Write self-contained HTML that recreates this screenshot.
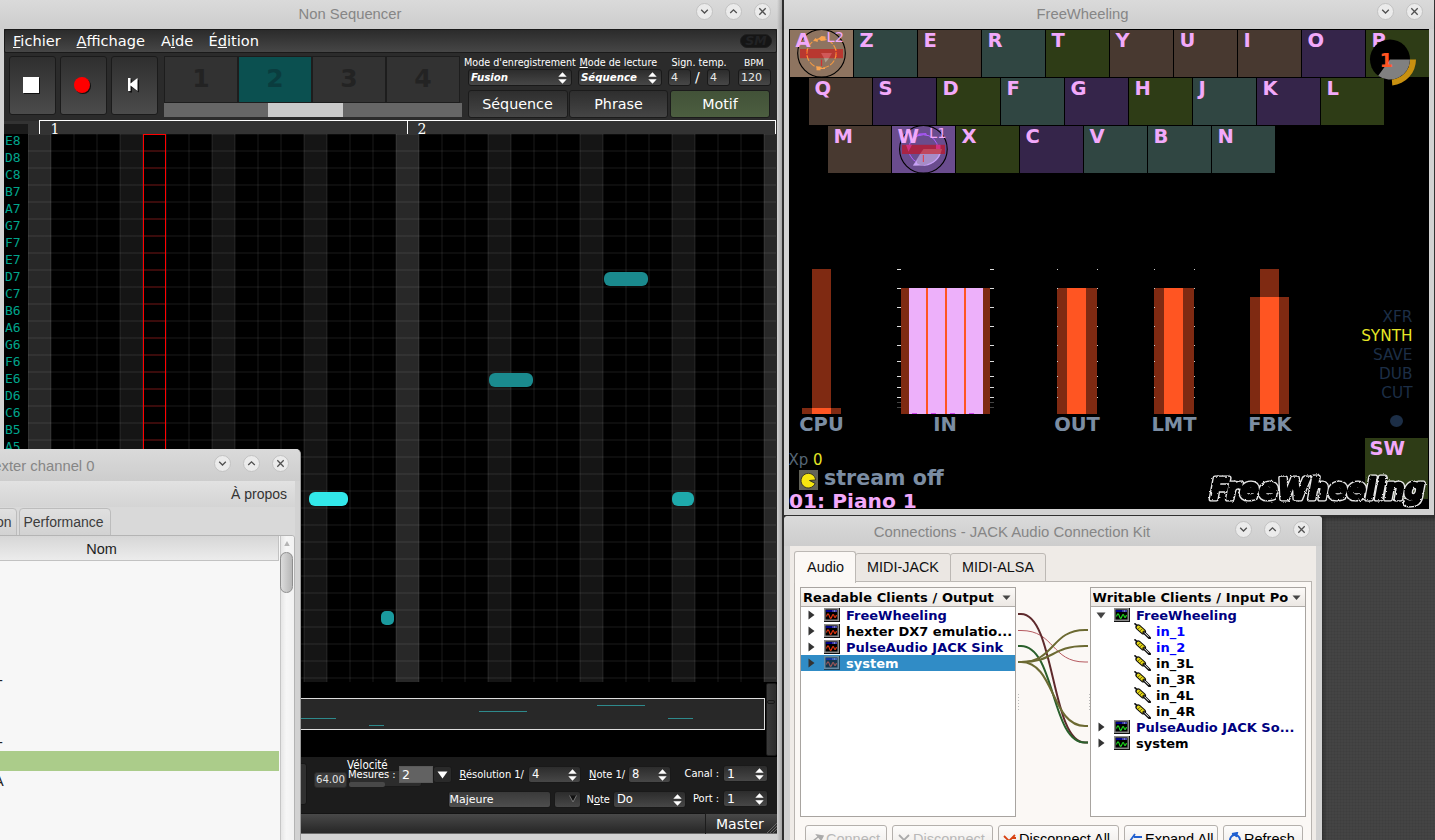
<!DOCTYPE html><html lang="fr"><head><meta charset="utf-8"><title>Desktop</title><style>
*{box-sizing:border-box;margin:0;padding:0}
html,body{width:1435px;height:840px;overflow:hidden;background:#444444}
body{position:relative;font-family:"DejaVu Sans","Liberation Sans",sans-serif;font-size:12px;color:#fff}
div,span,svg{position:absolute;white-space:pre}
.tb{background:linear-gradient(#dadada,#cdcdcd)}
.ttl{font:14.8px "Liberation Sans",sans-serif;color:#868686;line-height:28px;top:0;height:28px;text-align:center}
.wb{width:17px;height:17px;border-radius:50%;background:#ebebeb;border:1px solid #c2c2c2}
.wb svg{left:0;top:0}
.dj{font-family:"DejaVu Sans",sans-serif}
.fbtn{background:linear-gradient(#2f2f2f,#4b4b4b);border:1px solid #1b1b1b;border-radius:3px}
.inp{background:linear-gradient(#2c2c2c,#474747);border:1px solid #191919;border-radius:3px;color:#fff;font-family:"DejaVu Sans",sans-serif}
.lbl{color:#fff;font-family:"DejaVu Sans",sans-serif}
.key{width:63px;height:47px}
.kl{font:bold 19.5px "DejaVu Sans",sans-serif;color:#f2a9fa;left:5.5px;top:-1.5px;line-height:24px;z-index:3}
.ml{font:bold 19.5px "DejaVu Sans",sans-serif;color:#7b8da3;line-height:22px;text-align:center;width:80px}
.jr{font:bold 13px "DejaVu Sans",sans-serif;color:#000;line-height:16px;height:16px;margin-top:.5px}
.nl{font:13px "DejaVu Sans Mono",monospace;color:#00a48c;left:1px;line-height:17px;height:17px;margin-top:-2.5px}
.st{font:15.3px "DejaVu Sans",sans-serif;line-height:16px;text-align:right;width:70px;color:#1c2e46}
.u{text-decoration:underline}
</style></head><body>
<div id="nonseq" style="left:0;top:0;width:782px;height:840px;background:#d2d2d2">
<div class="tb" style="left:0;top:0;width:782px;height:29px"></div>
<div class="ttl" style="left:250px;width:200px">Non Sequencer</div>
<div class="wb" style="left:696.0px;top:3.0px"><svg width="17" height="17" viewBox="1 1 17 17"><path d="M5.2 6.8 L8.5 10 L11.8 6.8" fill="none" stroke="#505050" stroke-width="1.3"/></svg></div><div class="wb" style="left:725.0px;top:3.0px"><svg width="17" height="17" viewBox="1 1 17 17"><path d="M5.2 10 L8.5 6.8 L11.8 10" fill="none" stroke="#505050" stroke-width="1.3"/></svg></div><div class="wb" style="left:754.0px;top:3.0px"><svg width="17" height="17" viewBox="1 1 17 17"><path d="M5.3 5.3 L11.7 11.7 M11.7 5.3 L5.3 11.7" fill="none" stroke="#505050" stroke-width="1.3"/></svg></div>
<div id="nscontent" style="left:4px;top:29px;width:773px;height:805px;background:#2b2b2b;overflow:hidden">
<div style="left:0;top:0;width:773px;height:23.5px;background:linear-gradient(#2b2b2b,#464646);border:1px solid #1a1a1a;border-radius:2px"></div>
<div class="dj" style="left:9px;top:2px;font-size:14.6px;line-height:20px;color:#fff"><span class="u" style="position:static">F</span>ichier</div>
<div class="dj" style="left:72.5px;top:2px;font-size:14.6px;line-height:20px;color:#fff"><span class="u" style="position:static">A</span>ffichage</div>
<div class="dj" style="left:157px;top:2px;font-size:14.6px;line-height:20px;color:#fff">A<span class="u" style="position:static">i</span>de</div>
<div class="dj" style="left:204.5px;top:2px;font-size:14.6px;line-height:20px;color:#fff">É<span class="u" style="position:static">d</span>ition</div>
<div style="left:736px;top:5px;width:32px;height:14px;border-radius:7px;background:#151515;border:1px solid #1f1f1f"></div>
<div class="dj" style="left:736px;top:5px;width:32px;height:14px;line-height:14px;text-align:center;font:italic bold 12.5px 'DejaVu Sans',sans-serif;line-height:14px;color:#212224">SM</div>
<div class="fbtn" style="left:5px;top:27px;width:47px;height:59px"></div>
<div class="fbtn" style="left:56px;top:27px;width:47px;height:59px"></div>
<div class="fbtn" style="left:107px;top:27px;width:47px;height:59px"></div>
<div style="left:19px;top:48px;width:16px;height:16px;background:#fff;box-shadow:1px 1px 0 #111"></div>
<div style="left:70px;top:48px;width:16px;height:16px;border-radius:50%;background:#f00;box-shadow:1px 1px 0 #111"></div>
<svg style="left:123px;top:48px" width="14" height="16" viewBox="0 0 14 16"><path d="M1.5 1.5 h2.5 v5 l7 -5 v13 l-7 -5 v5 h-2.5 z" fill="#111" transform="translate(1,1)"/><path d="M1 1 h2.5 v5.5 l7 -5.5 v13 l-7 -5.5 v5.5 h-2.5 z" fill="#fff"/></svg>
<div style="left:160px;top:27px;width:74px;height:47px;background:#323232;border:1px solid #1d1d1d;font:bold 25px 'DejaVu Sans',sans-serif;line-height:44px;text-align:center;color:#232323">1</div>
<div style="left:234px;top:27px;width:74px;height:47px;background:#0b5050;border:1px solid #1d1d1d;font:bold 25px 'DejaVu Sans',sans-serif;line-height:44px;text-align:center;color:#0a3c3e">2</div>
<div style="left:308px;top:27px;width:74px;height:47px;background:#323232;border:1px solid #1d1d1d;font:bold 25px 'DejaVu Sans',sans-serif;line-height:44px;text-align:center;color:#232323">3</div>
<div style="left:382px;top:27px;width:74px;height:47px;background:#323232;border:1px solid #1d1d1d;font:bold 25px 'DejaVu Sans',sans-serif;line-height:44px;text-align:center;color:#232323">4</div>
<div style="left:160px;top:74px;width:298px;height:14px;background:#666"></div>
<div style="left:264px;top:74px;width:75px;height:14px;background:#cacaca"></div>
<div class="lbl" style="left:460px;top:27px;font-size:9.6px;line-height:13px">Mode d'enregistrement</div>
<div class="lbl" style="left:575.5px;top:27px;font-size:9.6px;line-height:13px"><span class="u" style="position:static">M</span>ode de lecture</div>
<div class="lbl" style="left:667.5px;top:26.5px;font-size:9.6px;line-height:13px">Sign. temp.</div>
<div class="lbl" style="left:740px;top:27px;font-size:9.2px;line-height:13px">BPM</div>
<div class="inp" style="left:464px;top:40px;width:104px;height:17px"></div>
<div class="dj" style="left:467px;top:40px;font:italic bold 10.2px 'DejaVu Sans',sans-serif;line-height:17px;color:#fff">Fusion</div>
<svg style="left:553.5px;top:42.5px" width="9" height="12" viewBox="0 0 9 12"><path d="M4.5 0.3 L8.7 4.8 L0.3 4.8 Z M4.5 11.7 L8.7 7.2 L0.3 7.2 Z" fill="#fff"/></svg>
<div class="inp" style="left:574px;top:40px;width:84px;height:17px"></div>
<div class="dj" style="left:577px;top:40px;font:italic bold 10.2px 'DejaVu Sans',sans-serif;line-height:17px;color:#fff">Séquence</div>
<svg style="left:643.5px;top:42.5px" width="9" height="12" viewBox="0 0 9 12"><path d="M4.5 0.3 L8.7 4.8 L0.3 4.8 Z M4.5 11.7 L8.7 7.2 L0.3 7.2 Z" fill="#fff"/></svg>
<div class="inp" style="left:664px;top:40px;width:23px;height:17px;font-size:11px;line-height:15px;padding-left:2px;color:#e8e8e8">4</div>
<div class="inp" style="left:703px;top:40px;width:23px;height:17px;font-size:11px;line-height:15px;padding-left:2px;color:#e8e8e8">4</div>
<div class="inp" style="left:734px;top:40px;width:33px;height:17px;font-size:11px;line-height:15px;padding-left:2px;color:#e8e8e8">120</div>
<div class="dj" style="left:691px;top:39px;font-size:14px;line-height:18px;color:#fff">/</div>
<div style="left:463.5px;top:60.5px;width:100px;height:28.5px;background:linear-gradient(#2e2e2e,#454545);border:1px solid #1b1b1b;border-radius:3px;font:14.3px 'DejaVu Sans',sans-serif;line-height:27px;text-align:center;color:#fff">Séquence</div>
<div style="left:565px;top:60.5px;width:99px;height:28.5px;background:linear-gradient(#2e2e2e,#454545);border:1px solid #1b1b1b;border-radius:3px;font:14.3px 'DejaVu Sans',sans-serif;line-height:27px;text-align:center;color:#fff">Phrase</div>
<div style="left:666px;top:60.5px;width:100px;height:28.5px;background:linear-gradient(#425238,#4c5e40);border:1px solid #1b1b1b;border-radius:3px;font:14.3px 'DejaVu Sans',sans-serif;line-height:27px;text-align:center;color:#fff">Motif</div>
<div style="left:0;top:92px;width:773px;height:13px;background:#333"></div>
<div style="left:0;top:95px;width:24px;height:10px;background:#1b1b1b"></div>
<div style="left:35px;top:91px;width:737px;height:14px;border:1px solid #fff;border-bottom:none"></div>
<div style="left:403px;top:91px;width:1px;height:14px;background:#fff"></div>
<div style="left:46.5px;top:92px;font:14px 'DejaVu Serif',serif;line-height:16px;color:#fff">1</div>
<div style="left:413.5px;top:92px;font:14px 'DejaVu Serif',serif;line-height:16px;color:#fff">2</div>
<div style="left:0;top:105px;width:24px;height:548px;background:#000"></div>
<div style="left:24px;top:105px;width:748px;height:548px;background:repeating-linear-gradient(90deg,rgba(255,255,255,.05) 0 1px,transparent 1px 22px,rgba(255,255,255,.05) 22px 23px),repeating-linear-gradient(180deg,rgba(255,255,255,.05) 0 1px,transparent 1px 16px,rgba(255,255,255,.05) 16px 17px),repeating-linear-gradient(90deg,#282828 0 23px,transparent 23px 368px),repeating-linear-gradient(90deg,#151515 0 23px,transparent 23px 92px),#000"></div>
<div class="nl" style="top:105px">E8</div>
<div class="nl" style="top:122px">D8</div>
<div class="nl" style="top:139px">C8</div>
<div class="nl" style="top:156px">B7</div>
<div class="nl" style="top:173px">A7</div>
<div class="nl" style="top:190px">G7</div>
<div class="nl" style="top:207px">F7</div>
<div class="nl" style="top:224px">E7</div>
<div class="nl" style="top:241px">D7</div>
<div class="nl" style="top:258px">C7</div>
<div class="nl" style="top:275px">B6</div>
<div class="nl" style="top:292px">A6</div>
<div class="nl" style="top:309px">G6</div>
<div class="nl" style="top:326px">F6</div>
<div class="nl" style="top:343px">E6</div>
<div class="nl" style="top:360px">D6</div>
<div class="nl" style="top:377px">C6</div>
<div class="nl" style="top:394px">B5</div>
<div class="nl" style="top:411px">A5</div>
<div class="nl" style="top:428px">G5</div>
<div class="nl" style="top:445px">F5</div>
<div class="nl" style="top:462px">E5</div>
<div class="nl" style="top:479px">D5</div>
<div class="nl" style="top:496px">C5</div>
<div class="nl" style="top:513px">B4</div>
<div class="nl" style="top:530px">A4</div>
<div class="nl" style="top:547px">G4</div>
<div class="nl" style="top:564px">F4</div>
<div class="nl" style="top:581px">E4</div>
<div class="nl" style="top:598px">D4</div>
<div class="nl" style="top:615px">C4</div>
<div class="nl" style="top:632px">B3</div>
<div style="left:139px;top:105px;width:23px;height:548px;border:1px solid #f00;border-bottom:none;background:repeating-linear-gradient(180deg,transparent 0 15px,rgba(255,0,0,.19) 15px 17px);background-clip:padding-box"></div>
<div style="left:599.5px;top:242.5px;width:44px;height:14px;border-radius:6px;background:#1a8a8e"></div>
<div style="left:484.5px;top:344px;width:44px;height:14px;border-radius:6px;background:#1a8a8e"></div>
<div style="left:304.5px;top:463px;width:39px;height:14px;border-radius:6px;background:#32e8ea"></div>
<div style="left:667.5px;top:463px;width:22px;height:14px;border-radius:6px;background:#1eaaac"></div>
<div style="left:377px;top:582px;width:13px;height:14px;border-radius:5px;background:#1a9a9e"></div>
<div style="left:0;top:653px;width:773px;height:75px;background:#000"></div>
<div style="left:286px;top:669px;width:474.5px;height:32px;background:#282828;border:1px solid #ddd"></div>
<div style="left:297px;top:689px;width:35px;height:1px;background:#2e8a8c"></div>
<div style="left:365px;top:696px;width:15px;height:1px;background:#2e8a8c"></div>
<div style="left:475px;top:682px;width:48px;height:1px;background:#2e8a8c"></div>
<div style="left:593px;top:676px;width:48px;height:1px;background:#2e8a8c"></div>
<div style="left:664px;top:689px;width:25px;height:1px;background:#2e8a8c"></div>
<div style="left:761.5px;top:654px;width:11px;height:73px;background:linear-gradient(90deg,#3a3a3a,#2c2c2c);border:1px solid #1a1a1a;border-radius:2px"></div>
<div style="left:763px;top:671px;width:8px;height:4px;border:1px solid #1a1a1a;border-radius:2px"></div>
<div style="left:0;top:728px;width:773px;height:56px;background:#1c1c1c"></div>
<div style="left:292px;top:734px;width:11px;height:42px;background:#303030;border:1px solid #161616;border-radius:3px"></div>
<div class="inp" style="left:310px;top:743px;width:33px;height:16px;font-size:10.2px;line-height:14px;text-align:center;color:#e4e4e4;background:#3c3c3c;border-color:#2a2a2a">64.00</div>
<div class="inp" style="left:345px;top:741px;width:73px;height:17px;background:#2c2c2c"></div>
<div style="left:345px;top:753px;width:36px;height:5px;background:#484848;border-radius:2px"></div>
<div class="lbl" style="left:343px;top:729px;font:11.5px 'DejaVu Sans Condensed',sans-serif;line-height:14px">Vélocité</div>
<div class="lbl" style="left:344px;top:739px;font:11px 'DejaVu Sans Condensed',sans-serif;line-height:14px">Mesures :</div>
<div style="left:395px;top:737px;width:33.5px;height:17px;background:#626262;border:1px solid #5a5a5a;font:12.5px 'DejaVu Sans',sans-serif;line-height:15px;padding-left:2px;color:#fff">2</div>
<div class="inp" style="left:429px;top:737px;width:19px;height:17px;background:#2a2a2a"></div>
<svg style="left:433px;top:742px" width="11" height="8" viewBox="0 0 11 8"><path d="M0.5 0.5 H10.5 L5.5 7.5 Z" fill="#fff"/></svg>
<div class="lbl" style="left:455.5px;top:738px;font:11px 'DejaVu Sans Condensed',sans-serif;line-height:16px"><span class="u" style="position:static">R</span>ésolution 1/</div>
<div class="inp" style="left:524px;top:737px;width:53px;height:17px;font-size:11.5px;line-height:15px;padding-left:3px">4</div>
<svg style="left:563.5px;top:739.5px" width="9" height="12" viewBox="0 0 9 12"><path d="M4.5 0.3 L8.7 4.8 L0.3 4.8 Z M4.5 11.7 L8.7 7.2 L0.3 7.2 Z" fill="#fff"/></svg>
<div class="lbl" style="left:585px;top:738px;font:11px 'DejaVu Sans Condensed',sans-serif;line-height:16px"><span class="u" style="position:static">N</span>ote 1/</div>
<div class="inp" style="left:624px;top:737px;width:43px;height:17px;font-size:11.5px;line-height:15px;padding-left:3px">8</div>
<svg style="left:653.5px;top:739.5px" width="9" height="12" viewBox="0 0 9 12"><path d="M4.5 0.3 L8.7 4.8 L0.3 4.8 Z M4.5 11.7 L8.7 7.2 L0.3 7.2 Z" fill="#fff"/></svg>
<div class="lbl" style="left:680.5px;top:737px;font:11px 'DejaVu Sans Condensed',sans-serif;line-height:16px">Canal :</div>
<div class="inp" style="left:719px;top:736px;width:45px;height:17px;font-size:12.5px;line-height:15px;padding-left:3px">1</div>
<svg style="left:750.5px;top:738.5px" width="9" height="12" viewBox="0 0 9 12"><path d="M4.5 0.3 L8.7 4.8 L0.3 4.8 Z M4.5 11.7 L8.7 7.2 L0.3 7.2 Z" fill="#fff"/></svg>
<div class="inp" style="left:443.5px;top:762px;width:103.5px;height:17px;background:linear-gradient(#3a3a3a,#4e4e4e);font-size:11px;line-height:15px;padding-left:1px">Majeure</div>
<div class="inp" style="left:549.5px;top:762px;width:27px;height:17px"></div>
<svg style="left:565px;top:766px" width="8" height="8" viewBox="0 0 8 8"><path d="M0.5 0.5 L4 7 L7.5 0.5" fill="#111" stroke="#777" stroke-width="1"/></svg>
<div class="lbl" style="left:582.5px;top:763px;font:11px 'DejaVu Sans Condensed',sans-serif;line-height:16px">N<span class="u" style="position:static">o</span>te</div>
<div class="inp" style="left:609px;top:762px;width:73px;height:17px;font-size:11.5px;line-height:15px;padding-left:3px">Do</div>
<svg style="left:668.5px;top:764.5px" width="9" height="12" viewBox="0 0 9 12"><path d="M4.5 0.3 L8.7 4.8 L0.3 4.8 Z M4.5 11.7 L8.7 7.2 L0.3 7.2 Z" fill="#fff"/></svg>
<div class="lbl" style="left:689px;top:762px;font:11px 'DejaVu Sans Condensed',sans-serif;line-height:16px">Port :</div>
<div class="inp" style="left:719px;top:761px;width:45px;height:17px;font-size:12.5px;line-height:15px;padding-left:3px">1</div>
<svg style="left:750.5px;top:763.5px" width="9" height="12" viewBox="0 0 9 12"><path d="M4.5 0.3 L8.7 4.8 L0.3 4.8 Z M4.5 11.7 L8.7 7.2 L0.3 7.2 Z" fill="#fff"/></svg>
<div style="left:0;top:784px;width:773px;height:21px;background:linear-gradient(#494949,#262626);border-top:1px solid #141414;border-bottom:1px solid #6a6a6a"></div>
<div style="left:701px;top:784px;width:72px;height:21px;border-left:1px solid #1c1c1c;border-top:1px solid #1c1c1c;font:14px 'DejaVu Sans',sans-serif;line-height:20px;padding-left:10px;color:#fff">Master</div>
<svg style="left:761px;top:793px" width="12" height="12" viewBox="0 0 12 12"><path d="M1 12 L12 1 M4 12 L12 4 M7 12 L12 7" stroke="#666" stroke-width="1"/></svg>
</div></div>
<div style="left:777px;top:0;width:5.3px;height:840px;background:linear-gradient(90deg,rgba(0,0,0,0),rgba(0,0,0,.22))"></div>
<div style="left:782.3px;top:0;width:1.8px;height:840px;background:#2e2e2e"></div>
<div style="left:1322px;top:517px;width:113px;height:323px;background:repeating-linear-gradient(90deg,rgba(0,0,0,.05) 0 1px,transparent 1px 3px),repeating-linear-gradient(180deg,rgba(0,0,0,.05) 0 1px,transparent 1px 3px),linear-gradient(180deg,rgba(0,0,0,.25),transparent 5px),linear-gradient(90deg,rgba(0,0,0,.25),transparent 5px)"></div>
<div style="left:1434px;top:0;width:1px;height:516px;background:#333"></div>
<div id="fw" style="left:784px;top:0;width:650px;height:515px;background:#d2d2d2">
<div class="tb" style="left:0;top:0;width:650px;height:29px"></div>
<div class="ttl" style="left:198.5px;width:200px">FreeWheeling</div>
<div class="wb" style="left:593.0px;top:3.0px"><svg width="17" height="17" viewBox="1 1 17 17"><path d="M5.2 6.8 L8.5 10 L11.8 6.8" fill="none" stroke="#505050" stroke-width="1.3"/></svg></div><div class="wb" style="left:622.0px;top:3.0px"><svg width="17" height="17" viewBox="1 1 17 17"><path d="M5.3 5.3 L11.7 11.7 M11.7 5.3 L5.3 11.7" fill="none" stroke="#505050" stroke-width="1.3"/></svg></div>
<div id="fwc" style="left:5px;top:29px;width:640px;height:480px;background:#000;overflow:hidden">
<div class="key" style="left:1px;top:1px;background:#8e7460"><span class="kl">A</span></div>
<div class="key" style="left:65px;top:1px;background:#304642"><span class="kl">Z</span></div>
<div class="key" style="left:129px;top:1px;background:#483930"><span class="kl">E</span></div>
<div class="key" style="left:193px;top:1px;background:#304642"><span class="kl">R</span></div>
<div class="key" style="left:257px;top:1px;background:#2e3c16"><span class="kl">T</span></div>
<div class="key" style="left:321px;top:1px;background:#483930"><span class="kl">Y</span></div>
<div class="key" style="left:385px;top:1px;background:#483930"><span class="kl">U</span></div>
<div class="key" style="left:449px;top:1px;background:#483930"><span class="kl">I</span></div>
<div class="key" style="left:513px;top:1px;background:#35254a"><span class="kl">O</span></div>
<div class="key" style="left:577px;top:1px;background:#2e3c16"><span class="kl">P</span></div>
<div class="key" style="left:20px;top:49px;background:#483930"><span class="kl">Q</span></div>
<div class="key" style="left:84px;top:49px;background:#35254a"><span class="kl">S</span></div>
<div class="key" style="left:148px;top:49px;background:#2e3c16"><span class="kl">D</span></div>
<div class="key" style="left:212px;top:49px;background:#304642"><span class="kl">F</span></div>
<div class="key" style="left:276px;top:49px;background:#35254a"><span class="kl">G</span></div>
<div class="key" style="left:340px;top:49px;background:#2e3c16"><span class="kl">H</span></div>
<div class="key" style="left:404px;top:49px;background:#304642"><span class="kl">J</span></div>
<div class="key" style="left:468px;top:49px;background:#35254a"><span class="kl">K</span></div>
<div class="key" style="left:532px;top:49px;background:#2e3c16"><span class="kl">L</span></div>
<div class="key" style="left:39px;top:97px;background:#483930"><span class="kl">M</span></div>
<div class="key" style="left:103px;top:97px;background:#6a4c8e"><span class="kl">W</span></div>
<div class="key" style="left:167px;top:97px;background:#2e3c16"><span class="kl">X</span></div>
<div class="key" style="left:231px;top:97px;background:#35254a"><span class="kl">C</span></div>
<div class="key" style="left:295px;top:97px;background:#304642"><span class="kl">V</span></div>
<div class="key" style="left:359px;top:97px;background:#304642"><span class="kl">B</span></div>
<div class="key" style="left:423px;top:97px;background:#304642"><span class="kl">N</span></div>
<svg style="left:1px;top:-1px" width="70" height="52" viewBox="0 0 70 52">
<circle cx="31.5" cy="25.3" r="23.8" fill="none" stroke="#000" stroke-width="1.1"/>
<rect x="10" y="21" width="43" height="9.2" fill="#b83830"/>
<circle cx="31.5" cy="25.3" r="14.6" fill="none" stroke="#f59a42" stroke-width="1.1" stroke-dasharray="6 1.5"/>
<path d="M28.5 10.5 L31.5 8 L35.5 8.5 L35.5 12.5 L31 13 Z" fill="#f9a450"/><path d="M23.5 12.5 L25.5 10 L28 12.5 L27.5 14 Z" fill="#f9a450"/><rect x="26.5" y="38.5" width="4" height="3.8" fill="#f9a450"/><rect x="30" y="40" width="5" height="1" fill="#f9a450"/>
<path d="M16.5 21 v9 M46.5 21 v9" stroke="#f05020" stroke-width="1" stroke-dasharray="2 1"/>
<path d="M31 25 L42 25 L39 30.2 L34 30.2 Z" fill="#d05858"/><path d="M34 30.2 L39 30.2 L35.5 34.5 Z" fill="#b0a090"/>
<path d="M31.5 31.5 V38" stroke="#d03030" stroke-width="1.2"/>
</svg>
<div class="dj" style="left:37.5px;top:0px;font-size:14.6px;line-height:16px;color:#f2a9fa;z-index:3">L2</div>
<svg style="left:103px;top:95px" width="70" height="52" viewBox="0 0 70 52">
<circle cx="31.4" cy="25.3" r="23.8" fill="none" stroke="#000" stroke-width="1.1"/>
<circle cx="31.4" cy="25.3" r="14.6" fill="none" stroke="#b060ff" stroke-width="1"/>
<path d="M17.5 21 A14.6 14.6 0 0 1 35 11 L34 9 L27 9.5 L18 18 Z" fill="#a855f8"/>
<rect x="10" y="20.8" width="43" height="9.2" fill="#a82444"/>
<path d="M14 20.8 h6 l-3.5 7 Z M44 20.8 h4.5 v7 l-4.5 -2 Z" fill="#d03080"/>
<path d="M28 30 L31.5 25 L50 25 L48.5 30 Z" fill="#c0485e"/>
<path d="M21 41.5 L28 30 L48.5 30 C46 37 38 43 21 41.5 Z" fill="#a68cc6"/>
<path d="M21 41.5 L27 34 C24 38 24 40 29 41 Z M48.5 30 C46 37 38 43 27 42 C38 41 45 36 47 30 Z" fill="#c8a0f8"/>
<path d="M31.4 31 V38" stroke="#d84858" stroke-width="1.2"/>
</svg>
<div class="dj" style="left:140px;top:96px;font-size:14.6px;line-height:16px;color:#f2a9fa;z-index:3">L1</div>
<svg style="left:577px;top:7px;z-index:4" width="56" height="52" viewBox="0 0 56 52">
<path d="M50 23.5 A26 26 0 0 1 26.3 49.4 L25.7 42 A19 19 0 0 0 43 23.5 Z" fill="#c89010"/>
<circle cx="24" cy="23.5" r="20" fill="#000"/>
<path d="M24 23.5 L44 23.5 A20 20 0 0 1 12.2 39.7 Z" fill="#808080"/>
</svg>
<div style="z-index:5;left:590.5px;top:19.5px;font:bold 19.5px 'DejaVu Sans',sans-serif;line-height:24px;color:#ff5522">1</div>
<div style="left:23px;top:240px;width:19px;height:145px;background:#7f2a12"></div>
<div style="left:13px;top:379px;width:39px;height:6px;background:#7f2a12"></div>
<div style="left:23px;top:379px;width:19px;height:6px;background:#ff5522"></div>
<div style="left:112px;top:259px;width:89px;height:126px;background:#7f2a12"></div>
<div style="left:120px;top:259px;width:74px;height:126px;background:#edb0fa"></div>
<div style="left:137px;top:259px;width:2px;height:126px;background:#ff5522"></div>
<div style="left:156px;top:259px;width:2px;height:126px;background:#ff5522"></div>
<div style="left:175px;top:259px;width:2px;height:126px;background:#ff5522"></div>
<div style="left:123px;top:384px;width:5px;height:1px;background:#d040f0"></div>
<div style="left:142px;top:384px;width:5px;height:1px;background:#d040f0"></div>
<div style="left:161px;top:384px;width:5px;height:1px;background:#d040f0"></div>
<div style="left:180px;top:384px;width:5px;height:1px;background:#d040f0"></div>
<div style="left:108px;top:240px;width:4px;height:1px;background:#ddd"></div>
<div style="left:201px;top:240px;width:4px;height:1px;background:#ddd"></div>
<div style="left:108px;top:259px;width:4px;height:1px;background:#ddd"></div>
<div style="left:201px;top:259px;width:4px;height:1px;background:#ddd"></div>
<div style="left:108px;top:278px;width:4px;height:1px;background:#ddd"></div>
<div style="left:201px;top:278px;width:4px;height:1px;background:#ddd"></div>
<div style="left:108px;top:297px;width:4px;height:1px;background:#ddd"></div>
<div style="left:201px;top:297px;width:4px;height:1px;background:#ddd"></div>
<div style="left:108px;top:316px;width:4px;height:1px;background:#ddd"></div>
<div style="left:201px;top:316px;width:4px;height:1px;background:#ddd"></div>
<div style="left:108px;top:332px;width:4px;height:1px;background:#ddd"></div>
<div style="left:201px;top:332px;width:4px;height:1px;background:#ddd"></div>
<div style="left:108px;top:347px;width:4px;height:1px;background:#ddd"></div>
<div style="left:201px;top:347px;width:4px;height:1px;background:#ddd"></div>
<div style="left:108px;top:358px;width:4px;height:1px;background:#ddd"></div>
<div style="left:201px;top:358px;width:4px;height:1px;background:#ddd"></div>
<div style="left:108px;top:368px;width:4px;height:1px;background:#ddd"></div>
<div style="left:201px;top:368px;width:4px;height:1px;background:#ddd"></div>
<div style="left:108px;top:373px;width:4px;height:1px;background:#444"></div>
<div style="left:201px;top:373px;width:4px;height:1px;background:#444"></div>
<div style="left:108px;top:378px;width:4px;height:1px;background:#444"></div>
<div style="left:201px;top:378px;width:4px;height:1px;background:#444"></div>
<div style="left:268px;top:259px;width:40px;height:126px;background:#7f2a12"></div>
<div style="left:278px;top:259px;width:19px;height:126px;background:#ff5522"></div>
<div style="left:365px;top:259px;width:40px;height:126px;background:#7f2a12"></div>
<div style="left:375px;top:259px;width:19px;height:126px;background:#ff5522"></div>
<div style="left:267.5px;top:240px;width:1px;height:1px;background:#ccc"></div>
<div style="left:307.5px;top:240px;width:1px;height:1px;background:#ccc"></div>
<div style="left:267.5px;top:259px;width:1px;height:1px;background:#ccc"></div>
<div style="left:307.5px;top:259px;width:1px;height:1px;background:#ccc"></div>
<div style="left:267.5px;top:278px;width:1px;height:1px;background:#ccc"></div>
<div style="left:307.5px;top:278px;width:1px;height:1px;background:#ccc"></div>
<div style="left:267.5px;top:297px;width:1px;height:1px;background:#ccc"></div>
<div style="left:307.5px;top:297px;width:1px;height:1px;background:#ccc"></div>
<div style="left:267.5px;top:316px;width:1px;height:1px;background:#ccc"></div>
<div style="left:307.5px;top:316px;width:1px;height:1px;background:#ccc"></div>
<div style="left:267.5px;top:332px;width:1px;height:1px;background:#ccc"></div>
<div style="left:307.5px;top:332px;width:1px;height:1px;background:#ccc"></div>
<div style="left:267.5px;top:347px;width:1px;height:1px;background:#ccc"></div>
<div style="left:307.5px;top:347px;width:1px;height:1px;background:#ccc"></div>
<div style="left:267.5px;top:358px;width:1px;height:1px;background:#ccc"></div>
<div style="left:307.5px;top:358px;width:1px;height:1px;background:#ccc"></div>
<div style="left:267.5px;top:368px;width:1px;height:1px;background:#ccc"></div>
<div style="left:307.5px;top:368px;width:1px;height:1px;background:#ccc"></div>
<div style="left:364.5px;top:240px;width:1px;height:1px;background:#ccc"></div>
<div style="left:404.5px;top:240px;width:1px;height:1px;background:#ccc"></div>
<div style="left:364.5px;top:259px;width:1px;height:1px;background:#ccc"></div>
<div style="left:404.5px;top:259px;width:1px;height:1px;background:#ccc"></div>
<div style="left:364.5px;top:278px;width:1px;height:1px;background:#ccc"></div>
<div style="left:404.5px;top:278px;width:1px;height:1px;background:#ccc"></div>
<div style="left:364.5px;top:297px;width:1px;height:1px;background:#ccc"></div>
<div style="left:404.5px;top:297px;width:1px;height:1px;background:#ccc"></div>
<div style="left:364.5px;top:316px;width:1px;height:1px;background:#ccc"></div>
<div style="left:404.5px;top:316px;width:1px;height:1px;background:#ccc"></div>
<div style="left:364.5px;top:332px;width:1px;height:1px;background:#ccc"></div>
<div style="left:404.5px;top:332px;width:1px;height:1px;background:#ccc"></div>
<div style="left:364.5px;top:347px;width:1px;height:1px;background:#ccc"></div>
<div style="left:404.5px;top:347px;width:1px;height:1px;background:#ccc"></div>
<div style="left:364.5px;top:358px;width:1px;height:1px;background:#ccc"></div>
<div style="left:404.5px;top:358px;width:1px;height:1px;background:#ccc"></div>
<div style="left:364.5px;top:368px;width:1px;height:1px;background:#ccc"></div>
<div style="left:404.5px;top:368px;width:1px;height:1px;background:#ccc"></div>
<div style="left:461px;top:268px;width:39px;height:117px;background:#7f2a12"></div>
<div style="left:471px;top:240px;width:19px;height:145px;background:#7f2a12"></div>
<div style="left:471px;top:268px;width:19px;height:117px;background:#ff5522"></div>
<div class="ml" style="left:-7.5px;top:384.5px">CPU</div>
<div class="ml" style="left:116px;top:384.5px">IN</div>
<div class="ml" style="left:248px;top:384.5px">OUT</div>
<div class="ml" style="left:345px;top:384.5px">LMT</div>
<div class="ml" style="left:441px;top:384.5px">FBK</div>
<div class="st" style="left:553.5px;top:280px">XFR</div>
<div class="st" style="left:553.5px;top:299px;color:#e6e626">SYNTH</div>
<div class="st" style="left:553.5px;top:318px">SAVE</div>
<div class="st" style="left:553.5px;top:337px">DUB</div>
<div class="st" style="left:553.5px;top:356px">CUT</div>
<div style="left:601px;top:385.5px;width:13px;height:12px;border-radius:50%;background:#1c2e46"></div>
<div style="left:576px;top:409px;width:63px;height:61px;background:#2e3c16"></div>
<div style="left:580.5px;top:408px;font:bold 19.5px 'DejaVu Sans',sans-serif;line-height:24px;color:#f2a9fa">SW</div>
<svg style="left:411px;top:437px" width="234" height="44" viewBox="0 0 234 44"><defs><filter id="rg" x="-5%" y="-20%" width="110%" height="140%"><feTurbulence type="fractalNoise" baseFrequency="0.45" numOctaves="2" seed="3" result="n"/><feDisplacementMap in="SourceGraphic" in2="n" scale="2.6"/></filter></defs><g filter="url(#rg)" font-family="DejaVu Sans,sans-serif" font-weight="bold" font-style="italic" font-size="29"><text x="10.5" y="32.5" textLength="214" lengthAdjust="spacingAndGlyphs" fill="#000" stroke="#e8e8e8" stroke-width="5.2" stroke-linejoin="round">FreeWheeling</text><text x="10.5" y="32.5" textLength="214" lengthAdjust="spacingAndGlyphs" fill="#000" stroke="#000" stroke-width="2.4" stroke-linejoin="round">FreeWheeling</text></g></svg>
<div class="dj" style="left:-0.5px;top:423px;font-size:15px;line-height:16px;color:#566676">Xp <span style="position:static;color:#e6e626">0</span></div>
<div style="left:9.5px;top:441px;width:19.5px;height:19.5px;background:#636358"></div>
<svg style="left:10px;top:441.5px" width="19" height="19" viewBox="0 0 19 19"><path d="M10.5 9.5 L16.6 8.9 A7.3 7.3 0 1 0 16.1 12.4 Z" fill="#f6e610" stroke="#2a2a20" stroke-width="0.9"/></svg>
<div style="left:35px;top:436.5px;font:bold 20.6px 'DejaVu Sans',sans-serif;line-height:24px;color:#7b8da3">stream off</div>
<div style="left:0px;top:459.5px;font:bold 20.2px 'DejaVu Sans',sans-serif;line-height:24px;color:#f2a9fa">01: Piano 1</div>
</div></div>
<div style="left:784px;top:515px;width:651px;height:2px;background:#303030"></div>
<div id="jack" style="left:784px;top:516px;width:538px;height:324px;background:#d2d2d2;border-radius:4px 4px 0 0;overflow:hidden">
<div class="tb" style="left:0;top:0;width:538px;height:30px"></div>
<div class="ttl" style="left:78px;width:300px;top:2px;font-size:14.9px">Connections - JACK Audio Connection Kit</div>
<div class="wb" style="left:451.0px;top:5.0px"><svg width="17" height="17" viewBox="1 1 17 17"><path d="M5.2 6.8 L8.5 10 L11.8 6.8" fill="none" stroke="#505050" stroke-width="1.3"/></svg></div><div class="wb" style="left:480.0px;top:5.0px"><svg width="17" height="17" viewBox="1 1 17 17"><path d="M5.2 10 L8.5 6.8 L11.8 10" fill="none" stroke="#505050" stroke-width="1.3"/></svg></div><div class="wb" style="left:509.0px;top:5.0px"><svg width="17" height="17" viewBox="1 1 17 17"><path d="M5.3 5.3 L11.7 11.7 M11.7 5.3 L5.3 11.7" fill="none" stroke="#505050" stroke-width="1.3"/></svg></div>
<div style="left:6px;top:30px;width:526px;height:300px;background:#efebe7"></div>
<div style="left:10px;top:65px;width:518px;height:270px;background:#fbf8f5;border:1px solid #b8b4b0"></div>
<div style="left:71px;top:37px;width:96px;height:28.5px;background:#ebe7e3;border:1px solid #bcb8b4;border-radius:3px 3px 0 0"></div>
<div style="left:166px;top:37px;width:96px;height:28.5px;background:#ebe7e3;border:1px solid #bcb8b4;border-radius:3px 3px 0 0"></div>
<div style="left:10px;top:35px;width:62px;height:31.5px;background:#fbf8f5;border:1px solid #bcb8b4;border-bottom:none;border-radius:3px 3px 0 0"></div>
<div style="left:11px;top:42px;width:61px;text-align:center;font:14.4px 'Liberation Sans',sans-serif;line-height:18px;color:#111">Audio</div>
<div style="left:71px;top:42px;width:96px;text-align:center;font:14.4px 'Liberation Sans',sans-serif;line-height:18px;color:#111">MIDI-JACK</div>
<div style="left:166px;top:42px;width:96px;text-align:center;font:14.4px 'Liberation Sans',sans-serif;line-height:18px;color:#111">MIDI-ALSA</div>
<div style="left:16px;top:71px;width:215.5px;height:229.5px;background:#fff;border:1px solid #a8a4a0"></div>
<div style="left:17px;top:72px;width:213.5px;height:18.5px;background:linear-gradient(#fbf9f7,#ece8e4);border-bottom:1px solid #b0aca8"></div>
<div style="left:306px;top:71px;width:215.5px;height:229.5px;background:#fff;border:1px solid #a8a4a0"></div>
<div style="left:307px;top:72px;width:213.5px;height:18.5px;background:linear-gradient(#fbf9f7,#ece8e4);border-bottom:1px solid #b0aca8"></div>
<div class="jr" style="left:19px;top:73px;letter-spacing:.1px">Readable Clients / Output</div>
<div class="jr" style="left:308.5px;top:73px;width:204px;overflow:hidden;letter-spacing:.1px">Writable Clients / Input Ports</div>
<div style="left:504px;top:73px;width:16px;height:16px;background:linear-gradient(#fbf9f7,#ece8e4)"></div>
<svg style="left:218px;top:79px" width="9" height="6" viewBox="0 0 9 6"><path d="M0.5 0.5 H8.5 L4.5 5 Z" fill="#444"/></svg>
<svg style="left:508px;top:79px" width="9" height="6" viewBox="0 0 9 6"><path d="M0.5 0.5 H8.5 L4.5 5 Z" fill="#444"/></svg>
<div style="left:17px;top:139px;width:213.5px;height:16px;background:#308cc6"></div>
<svg style="left:23.5px;top:94px" width="7" height="10" viewBox="0 0 7 10"><path d="M0.5 0.5 L6.5 5 L0.5 9.5 Z" fill="#333"/></svg>
<svg style="left:40px;top:92px;opacity:1" width="16" height="14" viewBox="0 0 16 14"><rect x="0" y="0" width="16" height="14" fill="#111"/><rect x="0" y="0" width="15" height="13" fill="#8c8c8c"/><rect x="1.5" y="1.5" width="12" height="10" fill="#000"/><rect x="2" y="2" width="11" height="2" fill="#000088"/><path d="M8.5 3 h4" stroke="#fff" stroke-width="1" stroke-dasharray="1 0.5"/><path d="M2.5 8.5 c1 -3.5 2 -3.5 3 0 c0.8 2.5 1.6 2.5 2.4 0 c0.8 -2.5 1.6 -2.5 2.4 0 c0.6 1.5 1.4 1 2.2 -1.5" fill="none" stroke="#f03810" stroke-width="1.1"/></svg>
<div class="jr" style="left:62px;top:91px;color:#00007f">FreeWheeling</div>
<svg style="left:23.5px;top:110px" width="7" height="10" viewBox="0 0 7 10"><path d="M0.5 0.5 L6.5 5 L0.5 9.5 Z" fill="#333"/></svg>
<svg style="left:40px;top:108px;opacity:1" width="16" height="14" viewBox="0 0 16 14"><rect x="0" y="0" width="16" height="14" fill="#111"/><rect x="0" y="0" width="15" height="13" fill="#8c8c8c"/><rect x="1.5" y="1.5" width="12" height="10" fill="#000"/><rect x="2" y="2" width="11" height="2" fill="#000088"/><path d="M8.5 3 h4" stroke="#fff" stroke-width="1" stroke-dasharray="1 0.5"/><path d="M2.5 8.5 c1 -3.5 2 -3.5 3 0 c0.8 2.5 1.6 2.5 2.4 0 c0.8 -2.5 1.6 -2.5 2.4 0 c0.6 1.5 1.4 1 2.2 -1.5" fill="none" stroke="#f03810" stroke-width="1.1"/></svg>
<div class="jr" style="left:62px;top:107px;color:#000">hexter DX7 emulatio...</div>
<svg style="left:23.5px;top:126px" width="7" height="10" viewBox="0 0 7 10"><path d="M0.5 0.5 L6.5 5 L0.5 9.5 Z" fill="#333"/></svg>
<svg style="left:40px;top:124px;opacity:1" width="16" height="14" viewBox="0 0 16 14"><rect x="0" y="0" width="16" height="14" fill="#111"/><rect x="0" y="0" width="15" height="13" fill="#8c8c8c"/><rect x="1.5" y="1.5" width="12" height="10" fill="#000"/><rect x="2" y="2" width="11" height="2" fill="#000088"/><path d="M8.5 3 h4" stroke="#fff" stroke-width="1" stroke-dasharray="1 0.5"/><path d="M2.5 8.5 c1 -3.5 2 -3.5 3 0 c0.8 2.5 1.6 2.5 2.4 0 c0.8 -2.5 1.6 -2.5 2.4 0 c0.6 1.5 1.4 1 2.2 -1.5" fill="none" stroke="#f03810" stroke-width="1.1"/></svg>
<div class="jr" style="left:62px;top:123px;color:#00007f">PulseAudio JACK Sink</div>
<svg style="left:23.5px;top:142px" width="7" height="10" viewBox="0 0 7 10"><path d="M0.5 0.5 L6.5 5 L0.5 9.5 Z" fill="#333"/></svg>
<svg style="left:40px;top:140px;opacity:0.6" width="16" height="14" viewBox="0 0 16 14"><rect x="0" y="0" width="16" height="14" fill="#111"/><rect x="0" y="0" width="15" height="13" fill="#8c8c8c"/><rect x="1.5" y="1.5" width="12" height="10" fill="#000"/><rect x="2" y="2" width="11" height="2" fill="#000088"/><path d="M8.5 3 h4" stroke="#fff" stroke-width="1" stroke-dasharray="1 0.5"/><path d="M2.5 8.5 c1 -3.5 2 -3.5 3 0 c0.8 2.5 1.6 2.5 2.4 0 c0.8 -2.5 1.6 -2.5 2.4 0 c0.6 1.5 1.4 1 2.2 -1.5" fill="none" stroke="#f03810" stroke-width="1.1"/></svg>
<div class="jr" style="left:62px;top:139px;color:#fff">system</div>
<svg style="left:311.5px;top:96px" width="10" height="7" viewBox="0 0 10 7"><path d="M0.5 0.5 H9.5 L5 6.5 Z" fill="#444"/></svg>
<svg style="left:330px;top:92px;opacity:1" width="16" height="14" viewBox="0 0 16 14"><rect x="0" y="0" width="16" height="14" fill="#111"/><rect x="0" y="0" width="15" height="13" fill="#8c8c8c"/><rect x="1.5" y="1.5" width="12" height="10" fill="#000"/><rect x="2" y="2" width="11" height="2" fill="#000088"/><path d="M8.5 3 h4" stroke="#fff" stroke-width="1" stroke-dasharray="1 0.5"/><path d="M2.5 8.5 c1 -3.5 2 -3.5 3 0 c0.8 2.5 1.6 2.5 2.4 0 c0.8 -2.5 1.6 -2.5 2.4 0 c0.6 1.5 1.4 1 2.2 -1.5" fill="none" stroke="#20e020" stroke-width="1.1"/></svg>
<div class="jr" style="left:352px;top:91px;color:#00007f">FreeWheeling</div>
<svg style="left:350px;top:107px" width="17" height="16" viewBox="0 0 17 16"><path d="M0.5 0.3 L3.5 3.2" stroke="#111" stroke-width="1.6"/><path d="M4.2 4.2 L9.2 8.6" stroke="#111" stroke-width="5.6" stroke-linecap="round"/><path d="M4.4 4.4 L9 8.4" stroke="#e6d818" stroke-width="3.4" stroke-linecap="round"/><path d="M4 6 L6.8 3.6 M6 7.8 L8.8 5.4 M8 9.4 L10.6 7.2" stroke="#5a5200" stroke-width="0.8"/><path d="M10 9.4 L15.6 15" stroke="#111" stroke-width="2.8" stroke-linecap="round"/><path d="M10.4 9.6 L14.6 13.8" stroke="#f4f4f4" stroke-width="1"/></svg>
<div class="jr" style="left:372px;top:107px;color:#0000ff">in_1</div>
<svg style="left:350px;top:123px" width="17" height="16" viewBox="0 0 17 16"><path d="M0.5 0.3 L3.5 3.2" stroke="#111" stroke-width="1.6"/><path d="M4.2 4.2 L9.2 8.6" stroke="#111" stroke-width="5.6" stroke-linecap="round"/><path d="M4.4 4.4 L9 8.4" stroke="#e6d818" stroke-width="3.4" stroke-linecap="round"/><path d="M4 6 L6.8 3.6 M6 7.8 L8.8 5.4 M8 9.4 L10.6 7.2" stroke="#5a5200" stroke-width="0.8"/><path d="M10 9.4 L15.6 15" stroke="#111" stroke-width="2.8" stroke-linecap="round"/><path d="M10.4 9.6 L14.6 13.8" stroke="#f4f4f4" stroke-width="1"/></svg>
<div class="jr" style="left:372px;top:123px;color:#0000ff">in_2</div>
<svg style="left:350px;top:139px" width="17" height="16" viewBox="0 0 17 16"><path d="M0.5 0.3 L3.5 3.2" stroke="#111" stroke-width="1.6"/><path d="M4.2 4.2 L9.2 8.6" stroke="#111" stroke-width="5.6" stroke-linecap="round"/><path d="M4.4 4.4 L9 8.4" stroke="#e6d818" stroke-width="3.4" stroke-linecap="round"/><path d="M4 6 L6.8 3.6 M6 7.8 L8.8 5.4 M8 9.4 L10.6 7.2" stroke="#5a5200" stroke-width="0.8"/><path d="M10 9.4 L15.6 15" stroke="#111" stroke-width="2.8" stroke-linecap="round"/><path d="M10.4 9.6 L14.6 13.8" stroke="#f4f4f4" stroke-width="1"/></svg>
<div class="jr" style="left:372px;top:139px;color:#000">in_3L</div>
<svg style="left:350px;top:155px" width="17" height="16" viewBox="0 0 17 16"><path d="M0.5 0.3 L3.5 3.2" stroke="#111" stroke-width="1.6"/><path d="M4.2 4.2 L9.2 8.6" stroke="#111" stroke-width="5.6" stroke-linecap="round"/><path d="M4.4 4.4 L9 8.4" stroke="#e6d818" stroke-width="3.4" stroke-linecap="round"/><path d="M4 6 L6.8 3.6 M6 7.8 L8.8 5.4 M8 9.4 L10.6 7.2" stroke="#5a5200" stroke-width="0.8"/><path d="M10 9.4 L15.6 15" stroke="#111" stroke-width="2.8" stroke-linecap="round"/><path d="M10.4 9.6 L14.6 13.8" stroke="#f4f4f4" stroke-width="1"/></svg>
<div class="jr" style="left:372px;top:155px;color:#000">in_3R</div>
<svg style="left:350px;top:171px" width="17" height="16" viewBox="0 0 17 16"><path d="M0.5 0.3 L3.5 3.2" stroke="#111" stroke-width="1.6"/><path d="M4.2 4.2 L9.2 8.6" stroke="#111" stroke-width="5.6" stroke-linecap="round"/><path d="M4.4 4.4 L9 8.4" stroke="#e6d818" stroke-width="3.4" stroke-linecap="round"/><path d="M4 6 L6.8 3.6 M6 7.8 L8.8 5.4 M8 9.4 L10.6 7.2" stroke="#5a5200" stroke-width="0.8"/><path d="M10 9.4 L15.6 15" stroke="#111" stroke-width="2.8" stroke-linecap="round"/><path d="M10.4 9.6 L14.6 13.8" stroke="#f4f4f4" stroke-width="1"/></svg>
<div class="jr" style="left:372px;top:171px;color:#000">in_4L</div>
<svg style="left:350px;top:187px" width="17" height="16" viewBox="0 0 17 16"><path d="M0.5 0.3 L3.5 3.2" stroke="#111" stroke-width="1.6"/><path d="M4.2 4.2 L9.2 8.6" stroke="#111" stroke-width="5.6" stroke-linecap="round"/><path d="M4.4 4.4 L9 8.4" stroke="#e6d818" stroke-width="3.4" stroke-linecap="round"/><path d="M4 6 L6.8 3.6 M6 7.8 L8.8 5.4 M8 9.4 L10.6 7.2" stroke="#5a5200" stroke-width="0.8"/><path d="M10 9.4 L15.6 15" stroke="#111" stroke-width="2.8" stroke-linecap="round"/><path d="M10.4 9.6 L14.6 13.8" stroke="#f4f4f4" stroke-width="1"/></svg>
<div class="jr" style="left:372px;top:187px;color:#000">in_4R</div>
<svg style="left:313.5px;top:206px" width="7" height="10" viewBox="0 0 7 10"><path d="M0.5 0.5 L6.5 5 L0.5 9.5 Z" fill="#333"/></svg>
<svg style="left:330px;top:204px;opacity:1" width="16" height="14" viewBox="0 0 16 14"><rect x="0" y="0" width="16" height="14" fill="#111"/><rect x="0" y="0" width="15" height="13" fill="#8c8c8c"/><rect x="1.5" y="1.5" width="12" height="10" fill="#000"/><rect x="2" y="2" width="11" height="2" fill="#000088"/><path d="M8.5 3 h4" stroke="#fff" stroke-width="1" stroke-dasharray="1 0.5"/><path d="M2.5 8.5 c1 -3.5 2 -3.5 3 0 c0.8 2.5 1.6 2.5 2.4 0 c0.8 -2.5 1.6 -2.5 2.4 0 c0.6 1.5 1.4 1 2.2 -1.5" fill="none" stroke="#20e020" stroke-width="1.1"/></svg>
<div class="jr" style="left:352px;top:203px;color:#00007f">PulseAudio JACK So...</div>
<svg style="left:313.5px;top:222px" width="7" height="10" viewBox="0 0 7 10"><path d="M0.5 0.5 L6.5 5 L0.5 9.5 Z" fill="#333"/></svg>
<svg style="left:330px;top:220px;opacity:1" width="16" height="14" viewBox="0 0 16 14"><rect x="0" y="0" width="16" height="14" fill="#111"/><rect x="0" y="0" width="15" height="13" fill="#8c8c8c"/><rect x="1.5" y="1.5" width="12" height="10" fill="#000"/><rect x="2" y="2" width="11" height="2" fill="#000088"/><path d="M8.5 3 h4" stroke="#fff" stroke-width="1" stroke-dasharray="1 0.5"/><path d="M2.5 8.5 c1 -3.5 2 -3.5 3 0 c0.8 2.5 1.6 2.5 2.4 0 c0.8 -2.5 1.6 -2.5 2.4 0 c0.6 1.5 1.4 1 2.2 -1.5" fill="none" stroke="#20e020" stroke-width="1.1"/></svg>
<div class="jr" style="left:352px;top:219px;color:#000">system</div>
<svg style="left:0;top:0" width="538" height="324" viewBox="0 0 538 324"><path d="M234 114.5 h3 C271.0 114.5 267.0 146 301 146 h3" fill="none" stroke="#b65a60" stroke-width="1"/><path d="M234 98 h3 C271.0 98 267.0 226.5 301 226.5 h3" fill="none" stroke="#5e2a2c" stroke-width="2"/><path d="M234 130 h3 C271.0 130 267.0 226.5 301 226.5 h3" fill="none" stroke="#2a602c" stroke-width="2"/><path d="M234 146 h3 C271.0 146 267.0 114 301 114 h3" fill="none" stroke="#6c6a32" stroke-width="2"/><path d="M234 146 h3 C271.0 146 267.0 130 301 130 h3" fill="none" stroke="#6c6a32" stroke-width="2"/><path d="M234 146 h3 C271.0 146 267.0 210 301 210 h3" fill="none" stroke="#6c6a32" stroke-width="2"/></svg>
<div style="left:234px;top:178px;width:1px;height:16px;background:repeating-linear-gradient(#bbb 0 1px,transparent 1px 3px)"></div>
<div style="left:304.5px;top:178px;width:1px;height:16px;background:repeating-linear-gradient(#bbb 0 1px,transparent 1px 3px)"></div>
<div style="left:20.5px;top:309px;width:82px;height:24px;background:linear-gradient(#fdfcfb,#eeebe8);border:1px solid #b4b0ac;border-radius:3px"></div>
<svg style="left:28px;top:317px" width="13" height="12" viewBox="0 0 13 12"><path d="M1 8 L6 4 M5 2 L9 7 L11 3 Z" stroke="#aaa" fill="#aaa" stroke-width="1.5"/></svg>
<div style="left:42px;top:314px;font:14.5px 'Liberation Sans',sans-serif;line-height:18px;color:#b8b8b8">Connect</div>
<div style="left:107.5px;top:309px;width:101px;height:24px;background:linear-gradient(#fdfcfb,#eeebe8);border:1px solid #b4b0ac;border-radius:3px"></div>
<svg style="left:114px;top:317px" width="13" height="12" viewBox="0 0 13 12"><path d="M1 2 L10 11 M11 2 L5 8" stroke="#aaa" fill="none" stroke-width="1.8"/></svg>
<div style="left:129px;top:314px;font:14.5px 'Liberation Sans',sans-serif;line-height:18px;color:#b8b8b8">Disconnect</div>
<div style="left:213.5px;top:309px;width:121px;height:24px;background:linear-gradient(#fdfcfb,#eeebe8);border:1px solid #b4b0ac;border-radius:3px"></div>
<svg style="left:219px;top:317px" width="14" height="12" viewBox="0 0 14 12"><path d="M1 3 L8 10 M12 2 L6 8 M9 5 h4 M9 8 h4" stroke="#d84010" fill="none" stroke-width="1.8"/></svg>
<div style="left:235px;top:314px;font:14.5px 'Liberation Sans',sans-serif;line-height:18px;color:#000">Disconnect All</div>
<div style="left:339.5px;top:309px;width:94px;height:24px;background:linear-gradient(#fdfcfb,#eeebe8);border:1px solid #b4b0ac;border-radius:3px"></div>
<svg style="left:345px;top:317px" width="14" height="12" viewBox="0 0 14 12"><path d="M13 4 H5 M13 8 H3 M6 1 L1 8" stroke="#2060d0" fill="none" stroke-width="1.8"/></svg>
<div style="left:361px;top:314px;font:14.5px 'Liberation Sans',sans-serif;line-height:18px;color:#000">Expand All</div>
<div style="left:438.5px;top:309px;width:80px;height:24px;background:linear-gradient(#fdfcfb,#eeebe8);border:1px solid #b4b0ac;border-radius:3px"></div>
<svg style="left:444px;top:316px" width="14" height="13" viewBox="0 0 14 13"><path d="M4 12 A5 5 0 1 1 11 11 M4 2 L9 1 L8 5" stroke="#2060d0" fill="none" stroke-width="2"/></svg>
<div style="left:460px;top:314px;font:14.5px 'Liberation Sans',sans-serif;line-height:18px;color:#000">Refresh</div>
</div>
<div id="hexter" style="left:0;top:449px;width:301px;height:391px;background:#d2d2d2;border-radius:0 5px 0 0;overflow:hidden;border-right:1px solid #9a9a9a">
<div class="tb" style="left:0;top:0;width:301px;height:32px"></div>
<div class="ttl" style="left:-105.5px;width:200px;top:3px;text-align:right;font-size:14.8px">hexter channel 0</div>
<div class="wb" style="left:214.0px;top:6.0px"><svg width="17" height="17" viewBox="1 1 17 17"><path d="M5.2 6.8 L8.5 10 L11.8 6.8" fill="none" stroke="#505050" stroke-width="1.3"/></svg></div><div class="wb" style="left:243.0px;top:6.0px"><svg width="17" height="17" viewBox="1 1 17 17"><path d="M5.2 10 L8.5 6.8 L11.8 10" fill="none" stroke="#505050" stroke-width="1.3"/></svg></div><div class="wb" style="left:272.0px;top:6.0px"><svg width="17" height="17" viewBox="1 1 17 17"><path d="M5.3 5.3 L11.7 11.7 M11.7 5.3 L5.3 11.7" fill="none" stroke="#505050" stroke-width="1.3"/></svg></div>
<div style="left:0;top:32px;width:295px;height:26px;background:linear-gradient(#e2e2e2,#d4d4d4)"></div>
<div style="left:187px;top:36px;width:100px;text-align:right;font:14px 'Liberation Sans',sans-serif;line-height:18px;color:#333">À propos</div>
<div style="left:0;top:58px;width:295px;height:340px;background:#d9d9d9"></div>
<div style="left:-10px;top:59px;width:26.5px;height:27.5px;background:linear-gradient(#e0e0e0,#d2d2d2);border:1px solid #bcbcbc;border-radius:4px 4px 0 0"></div>
<div style="left:18.5px;top:59px;width:92.5px;height:27.5px;background:linear-gradient(#e0e0e0,#d2d2d2);border:1px solid #bcbcbc;border-radius:4px 4px 0 0"></div>
<div style="left:-188.5px;top:64px;width:200px;text-align:right;font:14px 'Liberation Sans',sans-serif;line-height:18px;color:#3c3c3c">Configuration</div>
<div style="left:23.5px;top:64px;font:14px 'Liberation Sans',sans-serif;line-height:18px;color:#3c3c3c">Performance</div>
<div style="left:-2px;top:86px;width:297px;height:320px;background:#f7f7f7;border:1px solid #b4b4b4;border-radius:0 3px 0 0"></div>
<div style="left:0;top:87px;width:279px;height:25px;background:linear-gradient(#d6d6d6,#ececec);border-bottom:1px solid #c2c2c2;border-right:1px solid #c2c2c2"></div>
<div style="left:51.5px;top:90.70000000000005px;width:100px;text-align:center;font:14.5px 'Liberation Sans',sans-serif;line-height:18px;color:#222">Nom</div>
<div style="left:279.5px;top:87px;width:14.5px;height:320px;background:linear-gradient(90deg,#e6e6e6,#f6f6f6 40%,#f2f2f2);border-left:1px solid #c6c6c6;border-radius:0 3px 0 0"></div>
<svg style="left:283.7px;top:91.60000000000002px" width="6" height="5.4" viewBox="0 0 6 5.4"><path d="M3 0 L6 5.4 H0 Z" fill="#b4b4b4"/></svg>
<div style="left:280.2px;top:103px;width:12.6px;height:40.5px;border-radius:6.3px;background:linear-gradient(90deg,#dcdcdc,#b6b6b6);border:1px solid #8e8e8e"></div>
<div style="left:0;top:301.5px;width:279px;height:20.5px;background:#abcc8a"></div>
<div style="left:-6px;top:323px;font:14.5px 'Liberation Sans',sans-serif;line-height:18px;color:#222">A</div>
<div style="left:-2px;top:222px;font:14.5px 'Liberation Sans',sans-serif;line-height:18px;color:#222">-</div>
<div style="left:-2px;top:284px;font:14.5px 'Liberation Sans',sans-serif;line-height:18px;color:#222">-</div>
<div style="left:-5px;top:387px;font:14.5px 'Liberation Sans',sans-serif;line-height:18px;color:#222">4F</div>
</div>
</body></html>
